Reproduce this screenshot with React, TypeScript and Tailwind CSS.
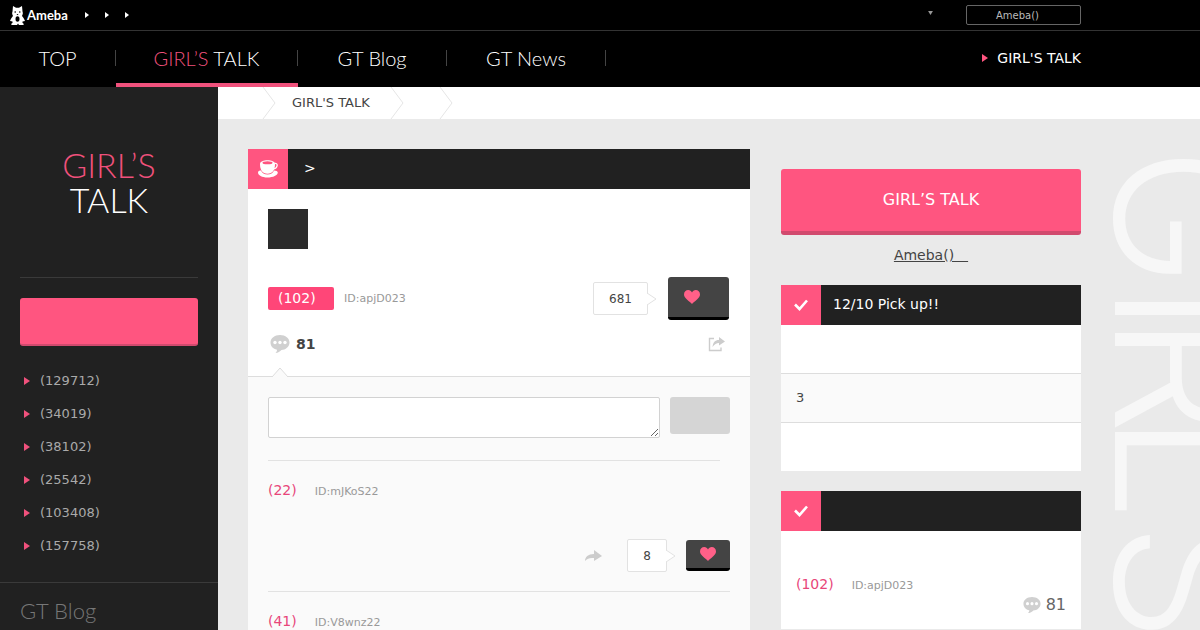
import type { ReactNode } from 'react';

const NAV = [
  { id: 'top', label: 'TOP', accent: '', active: false, box: 'w-29' },
  { id: 'talk', label: ' TALK', accent: 'GIRL’S', active: true, box: 'w-[182px]' },
  { id: 'blog', label: 'GT Blog', accent: '', active: false, box: 'w-[149px]' },
  { id: 'news', label: 'GT News', accent: '', active: false, box: 'w-[159px]' },
];

const CATEGORIES = ['(129712)', '(34019)', '(38102)', '(25542)', '(103408)', '(157758)'];

const COMMENTS = [
  { age: '(22)', user: 'ID:mJKoS22', likes: 8 },
  { age: '(41)', user: 'ID:V8wnz22', likes: 5 },
];

const PICKUPS = ['', '3', ''];

const WATERMARK = [
  { letter: 'G', box: 'h-[152px]' },
  { letter: 'I', box: 'h-8' },
  { letter: 'R', box: 'h-[100px]' },
  { letter: 'L', box: 'h-[84px]' },
  { letter: '’', box: 'h-7' },
  { letter: 'S', box: 'h-[90px]' },
];

export default function App() {
  return (
    <div className="flex h-screen flex-col overflow-hidden bg-[#eaeaea] font-['DejaVu_Sans',sans-serif] text-[13px] text-[#444]">
      <AmebaBar />
      <GlobalNav />
      <div className="flex min-h-0 flex-1">
        <Sidebar />
        <div className="flex min-w-0 flex-1 flex-col">
          <Breadcrumb />
          <div className="flex min-h-0 flex-1 items-start pl-[30px]">
            <Topic />
            <RightColumn />
            <Watermark />
          </div>
        </div>
      </div>
    </div>
  );
}

function AmebaBar() {
  return (
    <header className="flex-none border-b border-[#333] bg-black">
      <div className="flex h-[30px] w-full max-w-[1081px] items-center pl-[10px]">
        <a href="#ameba" className="flex items-center gap-[2px] text-white">
          <Mascot />
          <span className="font-['Lato',sans-serif] text-[13px] font-bold leading-5">Ameba</span>
        </a>
        <nav className="ml-[17px] flex gap-4" aria-label="Ameba services">
          {['Blog', 'Pigg', 'Now'].map((name) => (
            <a key={name} href="#service" aria-label={name} className="text-white">
              <Arrow className="h-[6px] w-1" />
            </a>
          ))}
        </nav>
        <button type="button" aria-label="Menu" className="mb-1 ml-auto mr-[33px] text-[#999]">
          <svg viewBox="0 0 6 5" className="h-1 w-[5px]" fill="currentColor">
            <path d="M0 0h6L3 5z" />
          </svg>
        </button>
        <a
          href="#register"
          className="flex h-5 w-[115px] items-center rounded-xs border border-[#666] pl-[29px] text-[10px] text-[#bbb]"
        >
          Ameba()
        </a>
      </div>
    </header>
  );
}

function GlobalNav() {
  return (
    <div className="flex-none bg-black">
      <div className="flex h-14 w-full max-w-[1081px] items-center justify-between">
        <nav className="flex h-14 font-['Lato',sans-serif] text-xl font-light text-white" aria-label="Main">
          {NAV.map((item) => (
            <a
              key={item.id}
              href={`#${item.id}`}
              className={`${item.box} flex items-center whitespace-pre border-b-4 pt-[2px] ${
                item.active ? 'border-[#f0517c]' : 'border-transparent'
              }`}
            >
              <span className="flex h-4 flex-1 items-center justify-center border-r border-[#444]">
                <span className="text-[#f0517c]">{item.accent}</span>
                {item.label}
              </span>
            </a>
          ))}
        </nav>
        <a href="#about" className="flex items-center gap-[9px] pb-[2px] text-sm text-white">
          <Arrow className="h-2 w-[6px] text-[#ff5580]" />
          GIRL&apos;S TALK
        </a>
      </div>
    </div>
  );
}

function Sidebar() {
  return (
    <aside className="w-[218px] flex-none bg-[#212121]">
      <div className="px-5">
        <h1 className="flex h-[191px] flex-col items-center border-b border-[#3a3a3a] pt-15 font-['Lato',sans-serif] text-[34px] font-light leading-[35px] text-white">
          <span className="text-[#f0517c]">GIRL’S</span>
          <span>TALK</span>
        </h1>
        <button
          type="button"
          aria-label="New topic"
          className="mt-5 block h-12 w-full rounded-[3px] border-b-2 border-[#d14a6e] bg-[#ff5580]"
        />
      </div>
      <ul className="mt-[18px] pl-6">
        {CATEGORIES.map((count) => (
          <li key={count}>
            <a href="#category" className="flex h-[33px] items-center gap-[10px] text-[#aaa]">
              <Arrow className="h-2 w-[6px] text-[#f0517c]" />
              {count}
            </a>
          </li>
        ))}
      </ul>
      <div className="mt-5 border-t border-[#3a3a3a] px-5 pt-[14px]">
        <a href="#blog" className="font-['Lato',sans-serif] text-[22px] font-light leading-7 text-[#777]">
          GT Blog
        </a>
      </div>
    </aside>
  );
}

function Breadcrumb() {
  return (
    <nav className="flex h-8 flex-none items-center bg-white pl-11 text-[#444]" aria-label="Breadcrumb">
      <Chevron />
      <a href="#talk" className="ml-4 mr-5 whitespace-nowrap">
        GIRL&apos;S TALK
      </a>
      <Chevron />
      <span className="w-[35px]" />
      <Chevron />
    </nav>
  );
}

function Topic() {
  return (
    <main className="mt-[30px] w-[502px] flex-none bg-white">
      <SectionTitle icon={<CupIcon />}>
        <span className="pl-1">&gt;</span>
      </SectionTitle>
      <div className="px-5 pt-5">
        <div className="size-10 bg-[#2b2b2b]" />
        <div className="mr-px mt-7 flex h-[43px] items-center">
          <span className="h-[23px] w-[66px] rounded-xs bg-[#ff4678] pl-[10px] text-sm leading-[22px] text-white">
            (102)
          </span>
          <span className="ml-[10px] pt-[2px] text-[11px] text-[#999]">ID:apjD023</span>
          <LikeCount>681</LikeCount>
          <button
            type="button"
            aria-label="Like topic"
            className="ml-[11px] flex h-[43px] w-[61px] items-center rounded-[3px] border-b-3 border-black bg-[#444] pl-4"
          >
            <Heart />
          </button>
        </div>
      </div>
      <div className="flex h-[57px] items-center border-b border-[#ddd] pb-3 pl-[22px] pr-[25px] pt-1">
        <Bubble className="size-5" />
        <span className="ml-[6px] text-sm font-bold">81</span>
        <button type="button" aria-label="Share" className="ml-auto text-[#ccc]">
          <svg viewBox="0 0 17 16" className="h-4 w-[17px]" fill="none">
            <path d="M6 2.500H1.500v12h11.500v-3" stroke="currentColor" strokeWidth="1.400" />
            <path d="M4.500 11c.5-4.500 2.500-7 6.500-7V1l6 4.500-6 4V7C8.500 7 6.500 8.500 4.500 11z" fill="currentColor" />
          </svg>
        </button>
      </div>
      <section className="relative bg-[#fafafa] px-5 pt-5">
        <svg viewBox="0 0 16 11" className="absolute -top-[10px] left-6 h-[11px] w-4">
          <path d="M0 10 8 1l8 9v1H0z" fill="#fafafa" />
          <path d="M0 10 8 1l8 9" fill="none" stroke="#ddd" />
        </svg>
        <form className="flex items-start gap-[10px]" onSubmit={(e) => e.preventDefault()}>
          <textarea
            aria-label="Comment"
            className="h-[41px] min-w-0 flex-1 rounded-xs border border-[#d2d2d2] bg-white p-2"
          />
          <button type="submit" aria-label="Post comment" className="h-[37px] w-15 rounded-[3px] bg-[#d5d5d5]" />
        </form>
        <hr className="mr-[10px] mt-[22px] border-[#e2e2e2]" />
        {COMMENTS.map((c) => (
          <article key={c.user} className="border-b border-[#e2e2e2] pb-5 pt-[19px]">
            <div className="flex h-5 items-center gap-[18px]">
              <span className="text-sm text-[#e8467a]">{c.age}</span>
              <span className="pt-1 text-[11px] text-[#999]">{c.user}</span>
            </div>
            <div className="mt-10 flex h-[31px] items-center">
              <button type="button" aria-label="Reply" className="ml-auto text-[#ccc]">
                <svg viewBox="0 0 17 12" className="h-3 w-[17px]" fill="currentColor">
                  <path d="M0 11c0-4 3-7 9-7V0l8 6-8 5V8C5 7.500 2 8.500 0 11z" />
                </svg>
              </button>
              <span className="ml-[25px] flex">
                <LikeCount small>{c.likes}</LikeCount>
              </span>
              <button
                type="button"
                aria-label="Like comment"
                className="ml-[10px] flex h-[31px] w-11 items-center justify-center rounded-[3px] border-b-3 border-black bg-[#444]"
              >
                <Heart />
              </button>
            </div>
          </article>
        ))}
      </section>
    </main>
  );
}

function RightColumn() {
  return (
    <aside className="ml-[31px] mt-[50px] w-[300px] flex-none">
      <a
        href="#start"
        className="flex h-[66px] items-center justify-center rounded-[3px] border-b-4 border-[#d14a6e] bg-[#ff5580] text-base text-white"
      >
        GIRL’S TALK
      </a>
      <p className="mt-[10px] text-center text-sm leading-5">
        <a href="#register" className="whitespace-pre underline">
          {'Ameba()\u2002\u2002'}
        </a>
      </p>
      <section className="mt-5">
        <SectionTitle icon={<Check />}>12/10 Pick up!!</SectionTitle>
        <ul className="bg-white">
          {PICKUPS.map((text, i) => (
            <li key={i} className="border-[#ddd] not-last:border-b even:bg-[#fafafa]">
              <a href="#pickup" className="flex h-12 items-center px-[15px]">
                {text}
              </a>
            </li>
          ))}
        </ul>
      </section>
      <section className="mt-5">
        <SectionTitle icon={<Check />} />
        <div className="h-[98px] bg-white px-[15px] pt-[43px]">
          <div className="flex h-5 items-center gap-[18px]">
            <span className="text-sm text-[#e8467a]">(102)</span>
            <span className="pt-1 text-[11px] text-[#999]">ID:apjD023</span>
          </div>
          <div className="flex h-[22px] items-center justify-end gap-[5px] text-base text-[#666]">
            <Bubble className="size-[18px]" />
            81
          </div>
        </div>
      </section>
    </aside>
  );
}

// Site name running down the right edge, cropped by the window
function Watermark() {
  return (
    <div
      aria-hidden="true"
      className="flex min-w-0 flex-1 flex-col self-stretch overflow-hidden pl-3 pt-[22px] font-['Inter',sans-serif] text-[188px] font-light leading-[180px] text-[#f7f7f7]"
    >
      {WATERMARK.map(({ letter, box }) => (
        <span key={letter} className={`${box} flex flex-none items-center justify-center self-start [writing-mode:vertical-lr]`}>
          {letter}
        </span>
      ))}
    </div>
  );
}

function SectionTitle({ icon, children }: { icon: ReactNode; children?: ReactNode }) {
  return (
    <h2 className="flex h-10 items-center bg-[#212121] text-sm text-white">
      <span className="flex size-10 flex-none items-center justify-center bg-[#ff5580]">{icon}</span>
      <span className="px-3 pb-[2px]">{children}</span>
    </h2>
  );
}

function LikeCount({ small = false, children }: { small?: boolean; children: ReactNode }) {
  return (
    <span className="ml-auto flex items-center">
      <span
        className={`flex h-[33px] items-center justify-center rounded-xs border border-[#e2e2e2] bg-white text-xs ${
          small ? 'w-10' : 'w-[55px]'
        }`}
      >
        {children}
      </span>
      <svg viewBox="0 0 10 12" className="-ml-px h-3 w-[10px]">
        <path d="M0 0l9 6-9 6" fill="#fff" stroke="#e2e2e2" />
      </svg>
    </span>
  );
}

function Arrow({ className }: { className: string }) {
  return (
    <svg viewBox="0 0 6 8" className={className} fill="currentColor" preserveAspectRatio="none">
      <path d="M0 0l6 4-6 4z" />
    </svg>
  );
}

function Chevron() {
  return (
    <svg viewBox="0 0 14 32" className="h-8 w-[14px] flex-none" fill="none">
      <path d="M1 0l12 16L1 32" stroke="#e5e5e5" />
    </svg>
  );
}

function Heart() {
  return (
    <svg viewBox="0 0 16 14" className="h-[14px] w-4 flex-none" fill="#ff6088">
      <path d="M8 14C6 11.500 0 8.500 0 4.500 0 1.500 2 0 4.200 0 6 0 7.300 1 8 2.500 8.700 1 10 0 11.800 0 14 0 16 1.500 16 4.500 16 8.500 10 11.500 8 14z" />
    </svg>
  );
}

function Check() {
  return (
    <svg viewBox="0 0 14 12" className="h-3 w-[14px]" fill="none">
      <path d="M1 5.500l4.500 4.500L13 1.500" stroke="#fff" strokeWidth="2.600" />
    </svg>
  );
}

function Bubble({ className }: { className: string }) {
  return (
    <svg viewBox="0 0 20 20" className={className}>
      <path d="M10 1c5.500 0 9.500 3.200 9.500 7.500S15.500 16 11.500 16c-1.500 1.500-3.500 2.800-6 3 1-1 1.500-2 1.500-3.300C3 15 .5 12 .5 8.500.5 4.200 4.500 1 10 1z" fill="#d0d0d0" />
      <g fill="#fff">
        <circle cx="5" cy="8.500" r="1.700" />
        <circle cx="10" cy="8.500" r="1.700" />
        <circle cx="15" cy="8.500" r="1.700" />
      </g>
    </svg>
  );
}

function CupIcon() {
  return (
    <svg viewBox="0 0 20 18" className="h-[18px] w-5" fill="#fff">
      <path d="M0 12.500C0 11 1.500 10.500 3 10.500c1 2.500 3.500 4 6.500 4s5.500-1.500 6.500-4c2 0 3.800.7 3.800 2 0 2.700-4.800 5-10.300 5S0 15.200 0 12.500z" />
      <path d="M2 4c0-5 15-5 15 0 0 6-2.500 9.800-7.500 9.800S2 10 2 4z" />
      <ellipse cx="9.500" cy="2.800" rx="5" ry="1.500" fill="#ff5580" />
      <path d="M16.500 3.500c4-1 3.500 5-1.500 5.500" fill="none" stroke="#fff" strokeWidth="1.300" />
    </svg>
  );
}

function Mascot() {
  return (
    <svg viewBox="0 0 15 19" className="h-[19px] w-[15px]" fill="#fff">
      <path d="M3 0l3 1.800h3L12 0l.5 5.500c1 2-.3 3.500-.5 4.500 1 1 2.500 3.500 3 5l-2.500.5V17c1 0 1.500 1 1 2H9l-1-1.500L7 19H1.500c-.5-1 0-2 1-2v-1.500L0 15c.5-1.500 2-4 3-5-.2-1-1.500-2.500-.5-4.500z" />
      <g fill="#000">
        <circle cx="5.200" cy="6" r=".8" />
        <circle cx="9.800" cy="6" r=".8" />
        <path d="M6.500 8h2l-1 1.200z" />
        <ellipse cx="7.500" cy="13" rx="2" ry="2.800" />
      </g>
    </svg>
  );
}
